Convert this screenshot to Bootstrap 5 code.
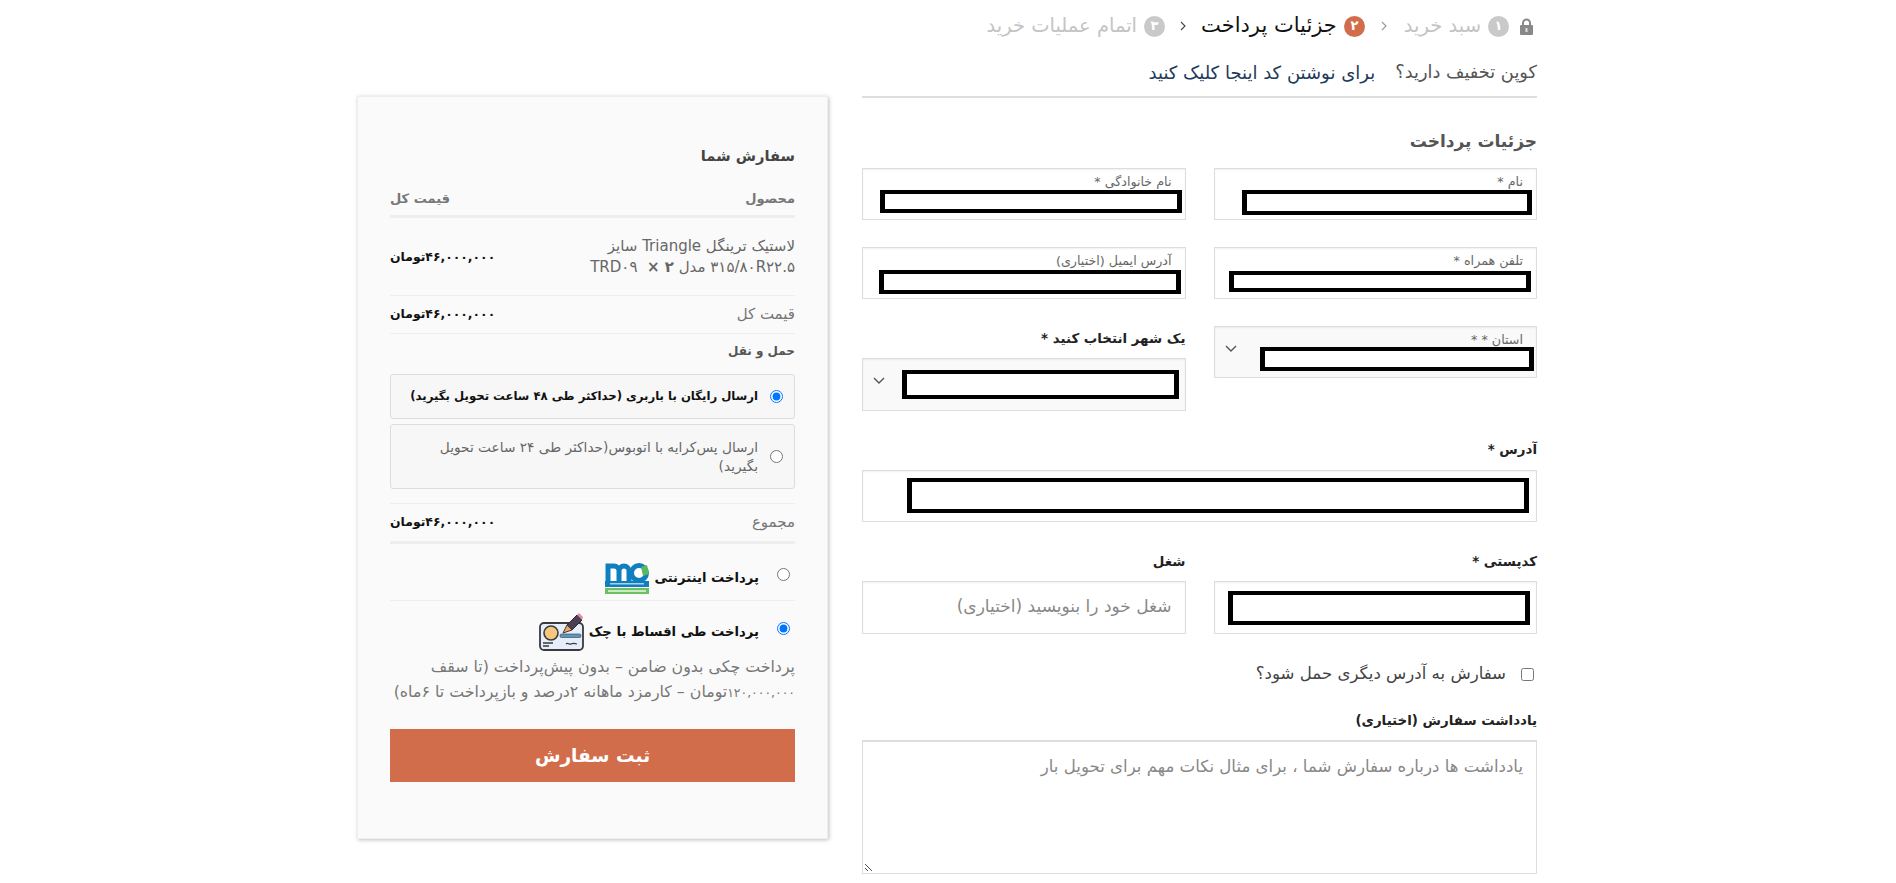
<!DOCTYPE html>
<html lang="fa" dir="rtl">
<head>
  <meta charset="UTF-8" />
  <meta name="viewport" content="width=device-width, initial-scale=1.0"/>
  <title>تسویه حساب</title>
  <link href="https://cdn.jsdelivr.net/npm/bootstrap@5.3.3/dist/css/bootstrap.min.css" rel="stylesheet">
  <style>
    body { font-family: "DejaVu Sans", "Noto Sans", sans-serif; color: #666; background: #fff; overflow: hidden; }
    .page-wrap { width: 1180px; margin-right: 359px; gap: 34px; }
    .main-col { width: 675px; flex: none; }
    .side-col { width: 471px; flex: none; padding-top: 96px; }

    .steps { height: 52px; color: #c4c4c4; font-size: 19.5px; gap: 7px; padding-right: 4px; }
    .steps .on { color: #111; font-size: 21px; }
    .step-lock { margin-left: 4px; }
    .step-num { width: 21px; height: 21px; border-radius: 50%; background: #c9c9c9; color: #fff; font-size: 13px; font-weight: 700; }
    .steps .step-num.on { background: #d26d4b; color: #fff; font-size: 13px; }
    .step-sep { margin: 0 8px; }
    .step-sep.first { margin: 0 9.5px; }
    .coupon { height: 46px; font-size: 17.8px; color: #555; gap: 20px; padding-bottom: 3px; border-bottom: 2px solid #ddd; }
    .coupon a { color: #1d3a5c; text-decoration: none; font-size: 18px; }
    .sec-title { font-size: 17px; font-weight: 700; color: #555; margin: 31px 0 15px; line-height: 24px; }

    .form-rows { --bs-gutter-x: 28px; --bs-gutter-y: 0; }
    .fld { position: relative; border: 1px solid #ddd; height: 52px; padding: 3px 13px; font-size: 12.7px; color: #666; background: #fff; box-shadow: inset 0 1px 2px rgba(0,0,0,.06); }
    .fld-sel { background: #f9f9f9; }
    .fld-tall { height: 53px; }
    .row-gap { margin-bottom: 27px; }
    .row-gap-lg { margin-bottom: 30px; }
    .row-gap-md { margin-bottom: 29px; }
    .out-label { font-size: 13.4px; font-weight: 700; color: #222; line-height: 20px; margin-bottom: 10px; }
    .out-label.city { margin-top: 3px; margin-bottom: 9px; }
    .out-label.tight { margin-bottom: 9px; }
    .hint { font-size: 17px; color: #888; line-height: 42px; }
    .chev { position: absolute; left: 10px; top: 18px; }
    .redact { position: absolute; border-style: solid; border-color: #000; border-width: 4px 5px; background: #fff; }
    .r-name { right: 4px; left: 27px; top: 21px; height: 25px; }
    .r-last { right: 3px; left: 17px; top: 21px; height: 23px; }
    .r-phone { right: 5px; left: 14px; top: 23px; height: 21px; }
    .r-mail { right: 4px; left: 16px; top: 22px; height: 24px; }
    .r-prov { right: 2px; left: 45px; top: 20px; height: 24px; }
    .r-city { right: 6px; left: 39px; top: 11px; height: 29px; }
    .r-addr { right: 7px; left: 44px; top: 7px; height: 35px; }
    .r-post { right: 6px; left: 13px; top: 9px; height: 34px; }
    .ship-check { height: 20px; margin: 30px 0 27px; font-size: 16.6px; color: #444; gap: 15px; padding-right: 3px; }
    .ship-check input { width: 13px; height: 13px; margin: 0; }
    .note-box { position: relative; height: 134px; border: 1px solid #ddd; border-top-width: 2px; padding: 13px 13px; font-size: 16.6px; color: #888; }
    .grip { position: absolute; left: 1px; bottom: 1px; }

    .order-box { height: 743px; background: #fafafa; border: 1px solid #eee; box-shadow: 1px 1px 4px rgba(0,0,0,.25); padding: 44px 32px 0; font-size: 13px; }
    .order-title { font-size: 14.7px; font-weight: 700; color: #444; line-height: 30px; margin-bottom: 18px; }
    .line-head { font-weight: 700; color: #777; height: 29px; border-bottom: 3px solid #eee; }
    .line-item { height: 78px; border-bottom: 1px solid #eee; line-height: 21px; color: #666; font-size: 15px; }
    .line-item .pname { width: 210px; }
    .line-sum { height: 38px; border-bottom: 1px solid #eee; color: #777; font-size: 15px; }
    .price { font-weight: 700; color: #111; font-size: 12.4px; }
    .ship-title { font-weight: 700; font-size: 12px; color: #555; line-height: 34px; margin-bottom: 6px; }
    .ship-opt { border: 1px solid #ddd; border-radius: 3px; background: #f7f7f7; padding: 0 11px; gap: 12px; margin-bottom: 5px; line-height: 19px; font-size: 13.7px; color: #666; }
    .ship-opt.sel { height: 45px; font-size: 11.7px; font-weight: 700; color: #111; }
    .ship-opt.two { height: 65px; }
    .ship-opt.two span { max-width: 335px; }
    .ship-opt input, .pay-row input { width: 13px; height: 13px; margin: 0; flex: none; }
    .ship-total { margin-top: 14px; border-top: 1px solid #eee; border-bottom: 3px solid #eee; height: 41px; color: #777; font-size: 15px; }
    .pay-row { padding-right: 5px; color: #111; font-weight: 700; font-size: 13.2px; }
    .pay-row span { margin-right: 18px; margin-left: 5px; }
    .pay-net { height: 57px; padding-top: 12px; border-bottom: 1px solid #eee; }
    .pay-net input { margin-bottom: 8px; }
    .pay-chk { height: 50px; padding-top: 12px; }
    .pay-chk input { margin-bottom: 8px; }
    .pay-desc { color: #777; font-size: 15.8px; line-height: 25px; margin: 3px 0 24px; }
    .pay-desc i { font-style: normal; font-size: 12.4px; }
    .order-btn { background: #d26d4b; color: #fff; width: 100%; height: 53px; border: 0; border-radius: 0; font-size: 18.5px; font-weight: 700; }
    .order-btn:hover { background: #c4603f; color: #fff; }
  </style>
</head>
<body>

<div class="page-wrap d-flex">
  <div class="main-col">
    <div class="steps d-flex align-items-center">
      <svg class="step-lock" width="13" height="17" viewBox="0 0 13 17"><path d="M3 7V5a3.5 3.5 0 0 1 7 0v2" fill="none" stroke="#888" stroke-width="2"/><rect y="7" width="13" height="10" rx="1" fill="#888"/><rect x="5.5" y="10" width="2" height="4" fill="#ddd"/></svg>
      <span class="step-num d-flex align-items-center justify-content-center">۱</span>
      <span>سبد خرید</span>
      <svg class="step-sep first" width="6" height="10" viewBox="0 0 6 10"><path d="M1 1l4 4-4 4" fill="none" stroke="#999" stroke-width="1.1"/></svg>
      <span class="step-num on d-flex align-items-center justify-content-center">۲</span>
      <span class="on">جزئیات پرداخت</span>
      <svg class="step-sep" width="6" height="10" viewBox="0 0 6 10"><path d="M1 1l4 4-4 4" fill="none" stroke="#444" stroke-width="1.1"/></svg>
      <span class="step-num d-flex align-items-center justify-content-center">۳</span>
      <span>اتمام عملیات خرید</span>
    </div>
    <div class="coupon d-flex align-items-center">
      <span>کوپن تخفیف دارید؟</span>
      <a href="#">برای نوشتن کد اینجا کلیک کنید</a>
    </div>

    <h5 class="sec-title">جزئیات پرداخت</h5>

    <div class="row form-rows row-gap">
      <div class="col-6"><div class="fld">نام *<span class="redact r-name"></span></div></div>
      <div class="col-6"><div class="fld">نام خانوادگی *<span class="redact r-last"></span></div></div>
    </div>
    <div class="row form-rows row-gap">
      <div class="col-6"><div class="fld">تلفن همراه *<span class="redact r-phone"></span></div></div>
      <div class="col-6"><div class="fld">آدرس ایمیل (اختیاری)<span class="redact r-mail"></span></div></div>
    </div>
    <div class="row form-rows row-gap-md">
      <div class="col-6">
        <div class="fld fld-sel">استان * *
          <svg class="chev" width="12" height="8" viewBox="0 0 12 8"><path d="M1 1l5 5 5-5" fill="none" stroke="#555" stroke-width="1.4"/></svg>
          <span class="redact r-prov"></span>
        </div>
      </div>
      <div class="col-6">
        <div class="out-label city">یک شهر انتخاب کنید *</div>
        <div class="fld fld-sel fld-tall">
          <svg class="chev" width="12" height="8" viewBox="0 0 12 8"><path d="M1 1l5 5 5-5" fill="none" stroke="#555" stroke-width="1.4"/></svg>
          <span class="redact r-city"></span>
        </div>
      </div>
    </div>
    <div class="out-label">آدرس *</div>
    <div class="fld row-gap-lg"><span class="redact r-addr"></span></div>
    <div class="row form-rows">
      <div class="col-6">
        <div class="out-label tight">کدپستی *</div>
        <div class="fld fld-tall"><span class="redact r-post"></span></div>
      </div>
      <div class="col-6">
        <div class="out-label tight">شغل</div>
        <div class="fld fld-tall hint">شغل خود را بنویسید (اختیاری)</div>
      </div>
    </div>
    <label class="ship-check d-flex align-items-center">
      <input type="checkbox">
      <span>سفارش به آدرس دیگری حمل شود؟</span>
    </label>
    <div class="out-label tight">یادداشت سفارش (اختیاری)</div>
    <div class="note-box">
      یادداشت ها درباره سفارش شما ، برای مثال نکات مهم برای تحویل بار
      <svg class="grip" width="9" height="9" viewBox="0 0 9 9"><path d="M1 1l7 7M1 5l3 3" stroke="#555" stroke-width="1"/></svg>
    </div>
  </div>

  <div class="side-col">
    <div class="order-box">
      <h5 class="order-title">سفارش شما</h5>
      <div class="line-head d-flex justify-content-between"><span>محصول</span><span>قیمت کل</span></div>
      <div class="line-item d-flex justify-content-between align-items-center">
        <div class="pname">لاستیک ترینگل Triangle سایز<br><span>۳۱۵/۸۰R۲۲.۵ مدل</span> <span>TRD۰۹</span>&nbsp; <b>× ۲</b></div>
        <span class="price">۴۶,۰۰۰,۰۰۰تومان</span>
      </div>
      <div class="line-sum d-flex justify-content-between align-items-center"><span>قیمت کل</span><span class="price">۴۶,۰۰۰,۰۰۰تومان</span></div>
      <div class="ship-title">حمل و نقل</div>
      <label class="ship-opt sel d-flex align-items-center">
        <input type="radio" name="ship" checked>
        <span>ارسال رایگان با باربری (حداکثر طی ۴۸ ساعت تحویل بگیرید)</span>
      </label>
      <label class="ship-opt two d-flex align-items-center">
        <input type="radio" name="ship">
        <span>ارسال پس‌کرایه با اتوبوس(حداکثر طی ۲۴ ساعت تحویل بگیرید)</span>
      </label>
      <div class="ship-total d-flex justify-content-between align-items-center"><span>مجموع</span><span class="price">۴۶,۰۰۰,۰۰۰تومان</span></div>
      <label class="pay-row pay-net d-flex align-items-center">
        <input type="radio" name="pay">
        <span>پرداخت اینترنتی</span>
        <svg width="44" height="32" viewBox="0 0 44 32">
          <rect width="44" height="32" fill="#fff"/>
          <path d="M3 21V4h6a5 5 0 0 1 5 5v12M14 9a5 5 0 0 1 5-5 5 5 0 0 1 5 5v12" fill="none" stroke="#0f7fc0" stroke-width="5"/>
          <circle cx="34" cy="11" r="7.5" fill="none" stroke="#0f7fc0" stroke-width="5"/>
          <path d="M36 5l6-2 2 9-6 2z" fill="#5cb85c"/>
          <rect y="19" width="44" height="6" fill="#0f7fc0"/>
          <rect x="5" y="21" width="34" height="1.5" fill="#a9d3ec"/>
          <rect y="26" width="44" height="6" fill="#6cc060"/>
          <rect x="3" y="28" width="38" height="2" fill="#c9ebc3"/>
        </svg>
      </label>
      <label class="pay-row pay-chk d-flex align-items-center">
        <input type="radio" name="pay" checked>
        <span>پرداخت طی اقساط با چک</span>
        <svg width="45" height="38" viewBox="0 0 45 38">
          <rect x="1" y="10" width="43" height="27" rx="4" fill="#e6eefb" stroke="#3a3a3a" stroke-width="1.8"/>
          <circle cx="12" cy="20" r="7" fill="#f8c77e" stroke="#3a3a3a" stroke-width="1.6"/>
          <rect x="21" y="21" width="21" height="3.5" rx="1.5" fill="#5b98bf" stroke="#3a3a3a" stroke-width=".6"/>
          <path d="M4 30h10M4 33h6" stroke="#3a3a3a" stroke-width="1.5"/>
          <path d="M27 31c2-2 3 1 5 0s3-1 6 0" fill="none" stroke="#3a3a3a" stroke-width="1.2"/>
          <path d="M28 12L38 2l5 5-10 10z" fill="#4a3f55" stroke="#2a2a2a" stroke-width="1"/>
          <path d="M28 12l5 5-9 3z" fill="#f0a860" stroke="#3a3a3a" stroke-width="1"/>
          <path d="M38 2l2-2 4 4-1 3z" fill="#e58aa0"/>
        </svg>
      </label>
      <div class="pay-desc">پرداخت چکی بدون ضامن – بدون پیش‌پرداخت (تا سقف <i>۱۲۰,۰۰۰,۰۰۰</i>تومان – کارمزد ماهانه ۲درصد و بازپرداخت تا ۶ماه)</div>
      <button class="btn order-btn">ثبت سفارش</button>
    </div>
  </div>
</div>

<script src="https://cdn.jsdelivr.net/npm/bootstrap@5.3.3/dist/js/bootstrap.bundle.min.js"></script>
</body>
</html>
